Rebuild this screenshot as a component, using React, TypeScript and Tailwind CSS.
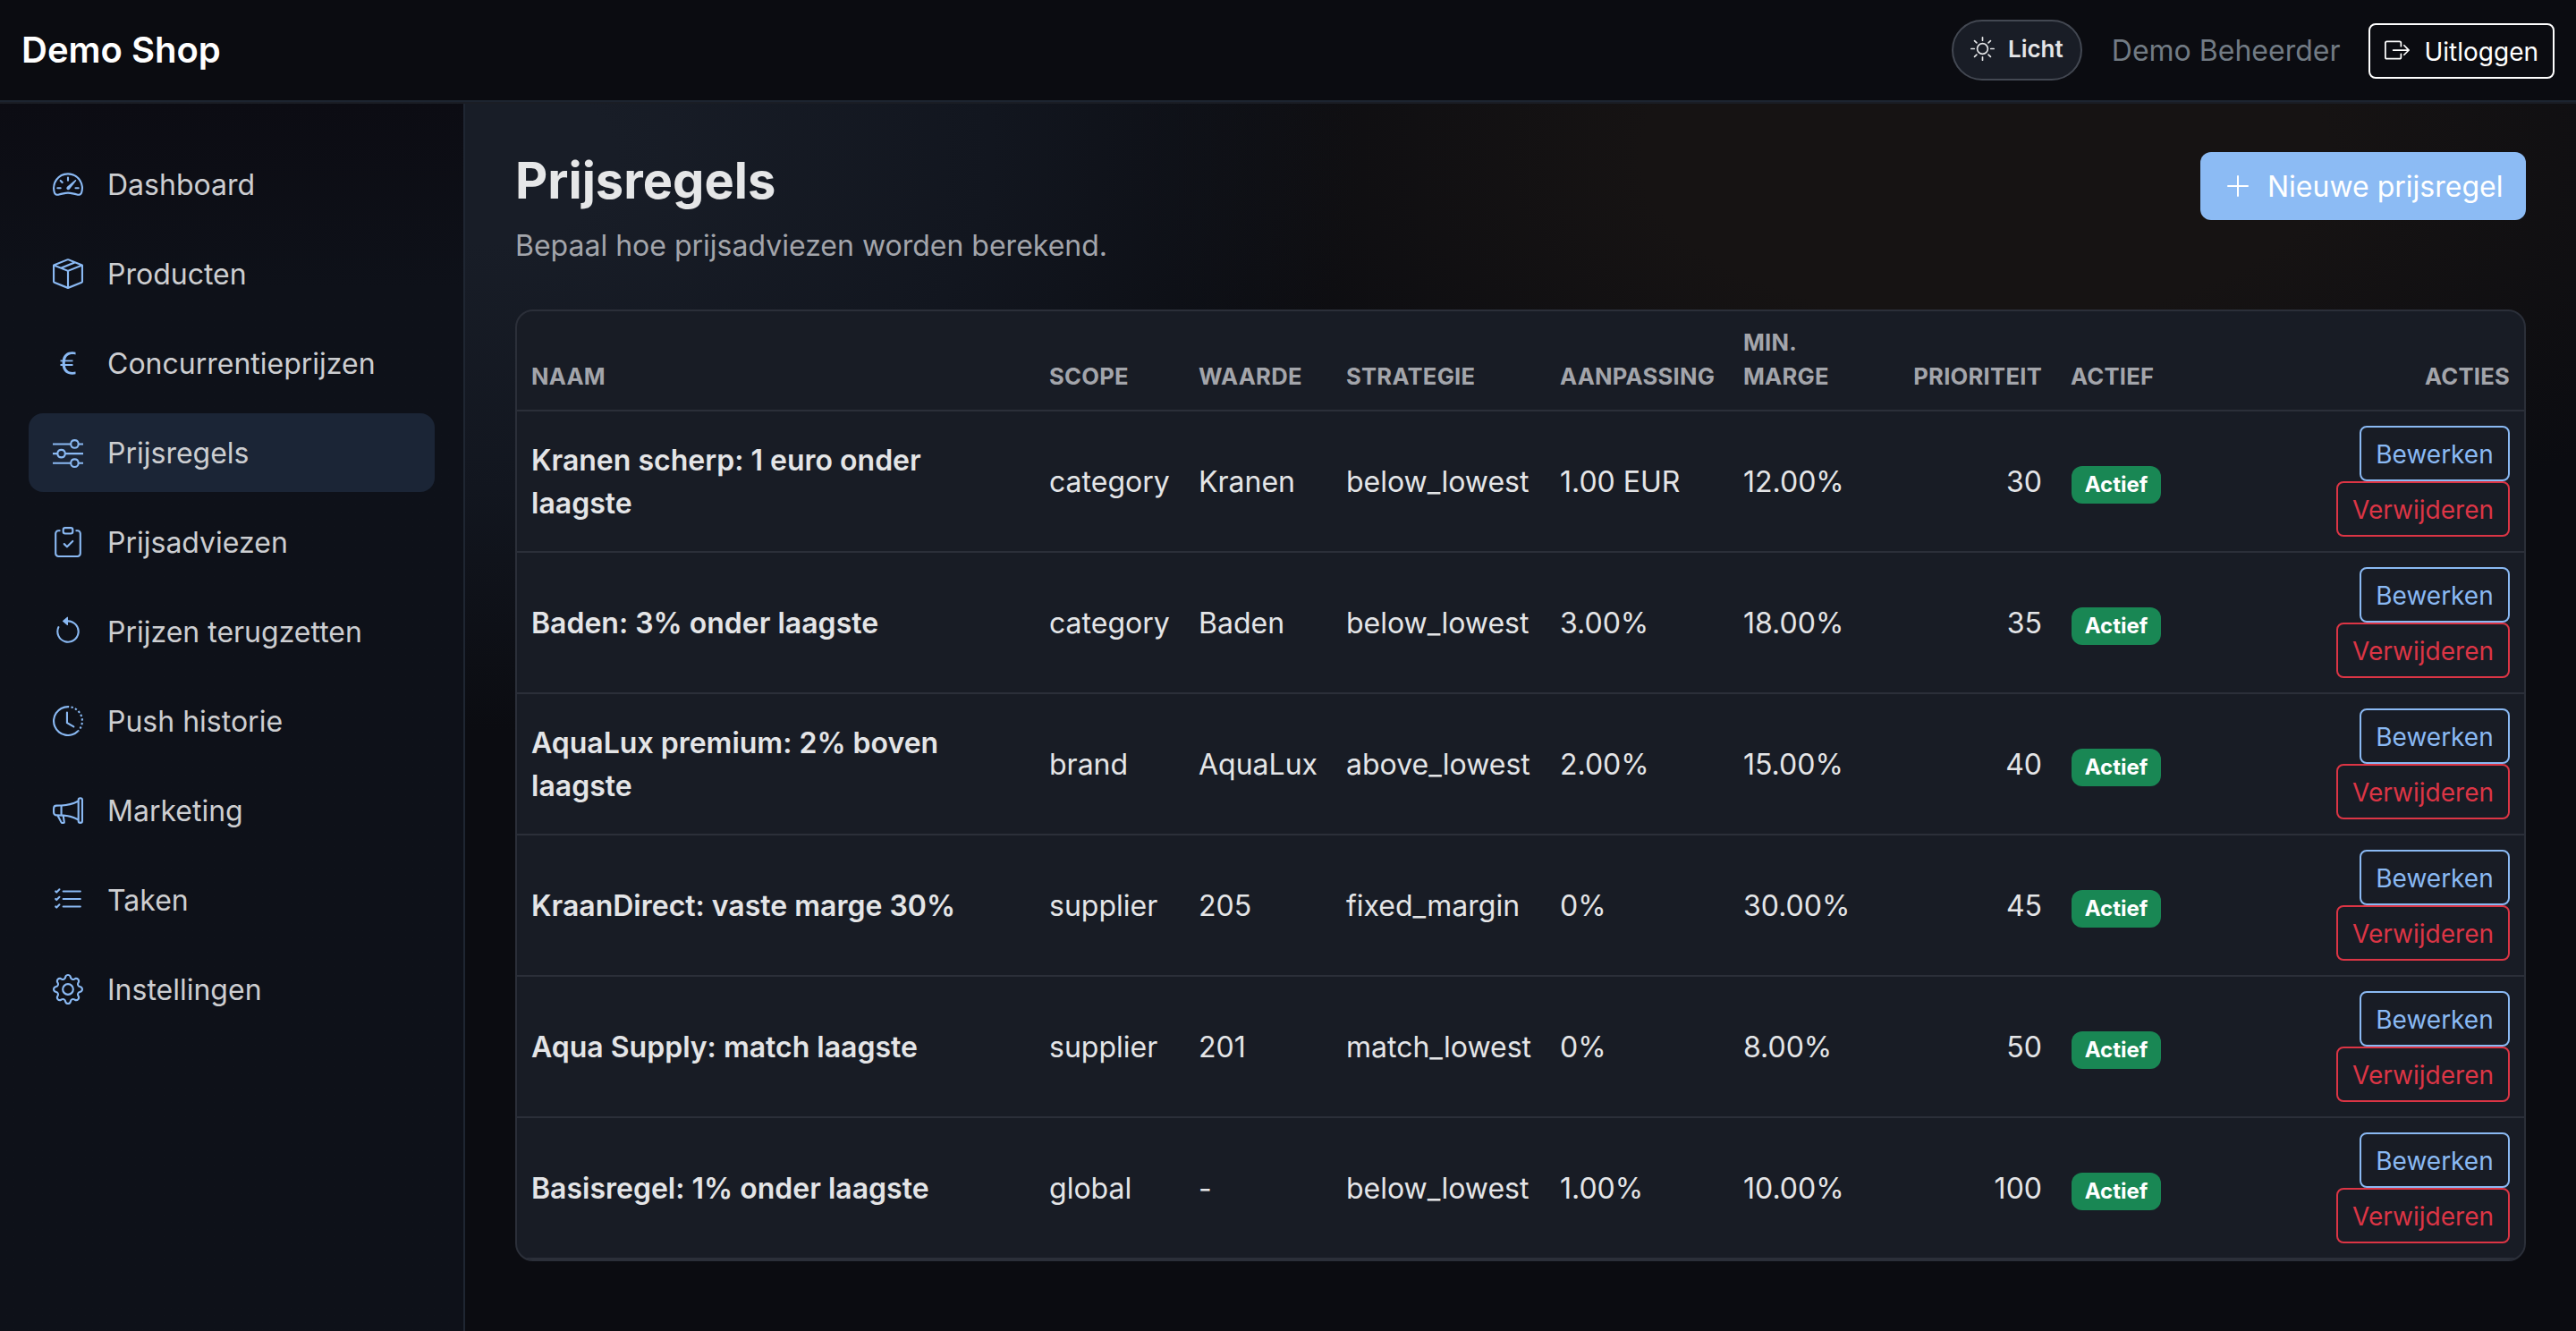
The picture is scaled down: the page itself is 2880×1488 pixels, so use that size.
import type { IconType } from 'react-icons'
import {
  BsArrowCounterclockwise,
  BsBoxArrowRight,
  BsBoxSeam,
  BsClipboardCheck,
  BsClockHistory,
  BsCurrencyEuro,
  BsGear,
  BsListCheck,
  BsMegaphone,
  BsPlusLg,
  BsSliders,
  BsSpeedometer2,
  BsSun,
} from 'react-icons/bs'

type NavItem = { label: string; icon: IconType; active?: boolean }

const NAV_ITEMS: NavItem[] = [
  { label: 'Dashboard', icon: BsSpeedometer2 },
  { label: 'Producten', icon: BsBoxSeam },
  { label: 'Concurrentieprijzen', icon: BsCurrencyEuro },
  { label: 'Prijsregels', icon: BsSliders, active: true },
  { label: 'Prijsadviezen', icon: BsClipboardCheck },
  { label: 'Prijzen terugzetten', icon: BsArrowCounterclockwise },
  { label: 'Push historie', icon: BsClockHistory },
  { label: 'Marketing', icon: BsMegaphone },
  { label: 'Taken', icon: BsListCheck },
  { label: 'Instellingen', icon: BsGear },
]

const RULES = [
  { name: 'Kranen scherp: 1 euro onder laagste', scope: 'category', value: 'Kranen', strategy: 'below_lowest', adjust: '1.00 EUR', margin: '12.00%', priority: 30 },
  { name: 'Baden: 3% onder laagste', scope: 'category', value: 'Baden', strategy: 'below_lowest', adjust: '3.00%', margin: '18.00%', priority: 35 },
  { name: 'AquaLux premium: 2% boven laagste', scope: 'brand', value: 'AquaLux', strategy: 'above_lowest', adjust: '2.00%', margin: '15.00%', priority: 40 },
  { name: 'KraanDirect: vaste marge 30%', scope: 'supplier', value: '205', strategy: 'fixed_margin', adjust: '0%', margin: '30.00%', priority: 45 },
  { name: 'Aqua Supply: match laagste', scope: 'supplier', value: '201', strategy: 'match_lowest', adjust: '0%', margin: '8.00%', priority: 50 },
  { name: 'Basisregel: 1% onder laagste', scope: 'global', value: '-', strategy: 'below_lowest', adjust: '1.00%', margin: '10.00%', priority: 100 },
]

function Topbar() {
  return (
    <header className="h-[116px] shrink-0 border-b-2 border-[#1a1d24] bg-[#0b0c11]">
      <div className="flex h-[114px] items-center justify-between border-b-2 border-[#1d2430] px-6">
        <span className="text-[40px] leading-[60px] font-semibold text-white">Demo Shop</span>
        <div className="flex items-center">
          <button className="flex h-[68px] w-[146px] items-center justify-center gap-[15px] rounded-full border-2 border-[#434852] bg-[#191d26] pb-[3px] text-[26px] font-semibold text-[#e4e5e7]">
            <BsSun className="size-[27px]" />
            Licht
          </button>
          <span className="ml-[33px] pt-0.5 text-[32px] leading-[48px] text-[#727b84]">Demo Beheerder</span>
          <button className="mt-0.5 ml-8 flex h-[62px] items-center rounded-lg border-2 border-white px-4 text-[28px] text-white">
            <BsBoxArrowRight className="mr-4 mb-0.5 size-7" />
            <span className="pt-0.5">Uitloggen</span>
          </button>
        </div>
      </div>
    </header>
  )
}

function Sidebar() {
  return (
    <aside className="w-[520px] shrink-0 border-r-2 border-[#1f2632] bg-[#0e1119] bg-linear-to-b from-[#0c0c13] to-[#0e1119] to-15% px-8 pt-[46px]">
      <nav className="flex flex-col gap-3">
        {NAV_ITEMS.map(({ label, icon: Icon, active }) => (
          <a
            key={label}
            className={`flex h-[88px] items-center gap-6 rounded-2xl px-6 text-[32px] text-[#cdced1] ${active ? 'bg-[#1b2536]' : ''}`}
          >
            <span className="flex w-10 justify-center text-[#8ab9f3]">
              <Icon className="size-[34px]" />
            </span>
            <span className="pt-0.5">{label}</span>
          </a>
        ))}
      </nav>
    </aside>
  )
}

function RulesTable() {
  return (
    <div className="overflow-hidden rounded-[20px] border-2 border-[#2b2f39] bg-[#181c25]">
      <table className="w-full table-fixed border-collapse text-[32px] leading-[48px] text-[#e4e5e7]">
        <colgroup>
          <col className="w-[579px]" />
          <col className="w-[167px]" />
          <col className="w-[165px]" />
          <col className="w-[239px]" />
          <col className="w-[205px]" />
          <col className="w-[190px]" />
          <col className="w-[176px]" />
          <col className="w-[133px]" />
          <col />
        </colgroup>
        <thead>
          <tr className="border-b-2 border-[#2b2f39] text-left align-bottom text-[25.6px] leading-[38px] tracking-[0.01em] text-[#a3a5ab] uppercase [&>th]:px-4 [&>th]:pt-4 [&>th]:pb-[18px] [&>th]:font-bold">
            <th>Naam</th>
            <th>Scope</th>
            <th>Waarde</th>
            <th>Strategie</th>
            <th>Aanpassing</th>
            <th>
              Min.
              <br />
              marge
            </th>
            <th className="text-right">Prioriteit</th>
            <th>Actief</th>
            <th className="text-right">Acties</th>
          </tr>
        </thead>
        <tbody>
          {RULES.map((rule) => (
            <tr key={rule.name} className="h-[158px] border-b-2 border-[#2b2f39] [&>td]:px-4 [&>td]:pt-0.5 [&>td]:pb-0">
              <td>
                <div className="w-[480px] font-semibold">{rule.name}</div>
              </td>
              <td>{rule.scope}</td>
              <td>{rule.value}</td>
              <td>{rule.strategy}</td>
              <td>{rule.adjust}</td>
              <td>{rule.margin}</td>
              <td className="text-right">{rule.priority}</td>
              <td>
                <span className="mt-[5px] ml-px flex h-[42px] w-[100px] items-center justify-center rounded-xl bg-[#198754] text-2xl font-bold text-white">
                  Actief
                </span>
              </td>
              <td>
                <div className="-mt-0.5 flex flex-col items-end text-[28px] leading-[42px]">
                  <button className="w-[168px] rounded-lg border-2 border-[#8ab9f3] pt-[9px] pb-[7px] text-[#8ab9f3]">Bewerken</button>
                  <button className="rounded-lg border-2 border-[#dc3545] px-4 pt-[9px] pb-[7px] text-[#dc3545]">Verwijderen</button>
                </div>
              </td>
            </tr>
          ))}
        </tbody>
      </table>
    </div>
  )
}

export default function App() {
  return (
    <div className="flex h-[1488px] w-[2880px] flex-col overflow-hidden bg-[#0b0c11] font-['Inter',sans-serif]">
      <Topbar />
      <div className="flex grow">
        <Sidebar />
        <main className="grow bg-[radial-gradient(ellipse_980px_640px_at_20px_60px,#181d27_15%,#12161f_58%,transparent_100%),radial-gradient(ellipse_960px_460px_at_1700px_60px,#161313_40%,transparent_100%)] px-14 pt-[54px]">
          <div className="mb-[47px] flex items-start justify-between">
            <div>
              <h1 className="mb-[17px] text-[56px] leading-[64px] font-bold text-[#e6e7e8]">Prijsregels</h1>
              <p className="text-[32px] leading-[48px] text-[#a3a5ab]">Bepaal hoe prijsadviezen worden berekend.</p>
            </div>
            <button className="flex h-[76px] w-[364px] items-center rounded-xl bg-[#8cbbf4] pl-[26px] text-[32px] whitespace-nowrap text-white">
              <BsPlusLg className="mr-[17px] size-8" />
              <span className="pt-0.5">Nieuwe prijsregel</span>
            </button>
          </div>
          <RulesTable />
        </main>
      </div>
    </div>
  )
}
